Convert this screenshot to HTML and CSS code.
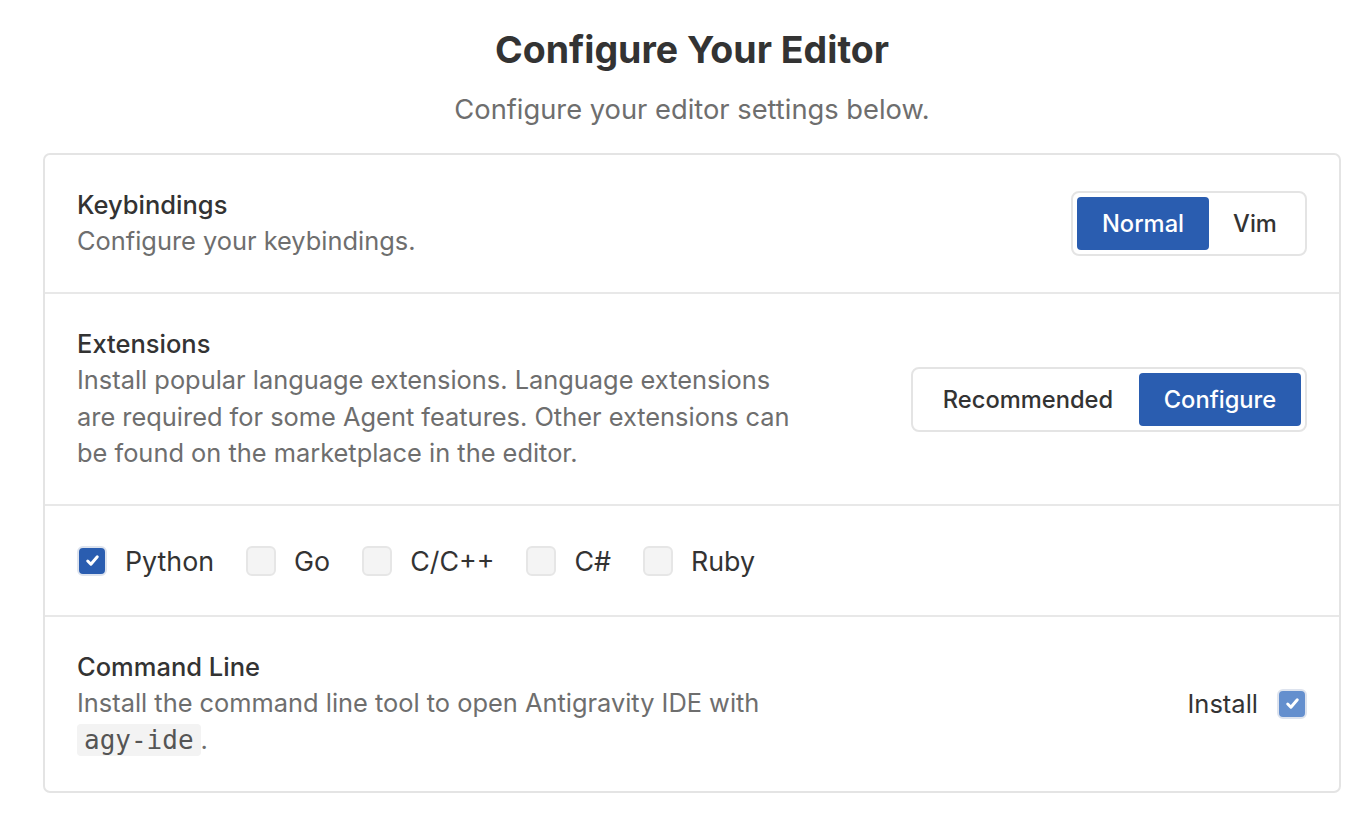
FILE: index.html
```html
<!DOCTYPE html>
<html lang="en">
  <head>
    <meta charset="UTF-8" />
    <meta name="viewport" content="width=device-width, initial-scale=1.0" />
    <title>Configure Your Editor</title>
    <link rel="stylesheet" href="styles.css">
  </head>
  <body>
    <div class="page">
      <h1 class="page-title">Configure Your Editor</h1>
      <p class="page-subtitle">Configure your editor settings below.</p>

      <div class="settings-card">
        <div class="setting-row">
          <div class="setting-info">
            <div class="setting-title">Keybindings</div>
            <div class="setting-desc">Configure your keybindings.</div>
          </div>
          <div class="segmented">
            <button class="seg-btn active seg-normal">Normal</button>
            <button class="seg-btn seg-vim">Vim</button>
          </div>
        </div>

        <div class="setting-row extensions-row">
          <div class="setting-info">
            <div class="setting-title">Extensions</div>
            <div class="setting-desc ext-desc">
              Install popular language extensions. Language extensions are required for some Agent features. Other extensions can be found on the marketplace in the editor.
            </div>
          </div>
          <div class="segmented">
            <button class="seg-btn seg-rec">Recommended</button>
            <button class="seg-btn active seg-conf">Configure</button>
          </div>
        </div>

        <div class="setting-row lang-row">
          <label class="lang-option">
            <span class="check checked">
              <svg viewBox="0 0 16 16" width="17" height="17"><path d="M3.5 8.5l3 3 6-7" fill="none" stroke="#fff" stroke-width="2.8" stroke-linecap="round" stroke-linejoin="round"/></svg>
            </span>
            Python
          </label>
          <label class="lang-option"><span class="check"></span>Go</label>
          <label class="lang-option"><span class="check"></span>C/C++</label>
          <label class="lang-option"><span class="check"></span>C#</label>
          <label class="lang-option"><span class="check"></span>Ruby</label>
        </div>

        <div class="setting-row cli-row">
          <div class="setting-info">
            <div class="setting-title">Command Line</div>
            <div class="setting-desc cli-desc">
              Install the command line tool to open Antigravity IDE with <code class="inline-code">agy-ide</code>.
            </div>
          </div>
          <label class="install">
            Install
            <span class="check checked soft">
              <svg viewBox="0 0 16 16" width="17" height="17"><path d="M3.5 8.5l3 3 6-7" fill="none" stroke="#fff" stroke-width="2.8" stroke-linecap="round" stroke-linejoin="round"/></svg>
            </span>
          </label>
        </div>
      </div>
    </div>
  </body>
</html>
```

FILE: styles.css
```css
body {
  margin: 0;
  font-family: Inter, "Noto Sans", sans-serif;
  background-color: #fff;
  color: #333;
}

.page {
  padding: 27px 29px 0 43px;
}

.page-title {
  margin: 0;
  text-align: center;
  font-size: 37.5px;
  font-weight: 700;
  line-height: 46px;
  color: #333;
}

.page-subtitle {
  margin: 20px 0 26px;
  text-align: center;
  font-size: 27.3px;
  line-height: 34px;
  color: #6e6e6e;
}

.settings-card {
  border: 2px solid #e4e4e4;
  border-radius: 7px;
}

.setting-row {
  display: flex;
  align-items: center;
  justify-content: space-between;
  padding: 0 32px;
  border-bottom: 2px solid #e8e8e8;
}
.setting-row:last-child {
  border-bottom: none;
}

.setting-row:first-child {
  height: 137px;
}
.extensions-row {
  height: 210px;
}
.lang-row {
  height: 109px;
  justify-content: flex-start;
  gap: 32px;
}
.cli-row {
  height: 174px;
  align-items: flex-start;
  padding-top: 32px;
  box-sizing: border-box;
}

.setting-title {
  font-size: 25.5px;
  font-weight: 500;
  line-height: 36px;
  color: #333;
}

.setting-desc {
  font-size: 25.4px;
  line-height: 36.5px;
  color: #6e6e6e;
}

.ext-desc {
  max-width: 730px;
}
.cli-desc {
  max-width: 720px;
}

.segmented {
  display: flex;
  padding: 4px;
  border: 2px solid #e4e4e4;
  border-radius: 8px;
  background-color: #fff;
}

.seg-btn {
  border: none;
  background: none;
  font-family: inherit;
  font-size: 23.7px;
  font-weight: 500;
  color: #333;
  height: 53px;
  padding: 0;
  border-radius: 4px;
}
.seg-btn.active {
  background-color: #2a5db0;
  color: #fff;
}
.seg-normal {
  width: 132px;
}
.seg-vim {
  width: 92px;
}
.seg-rec {
  width: 222px;
}
.seg-conf {
  width: 162px;
}

.lang-option {
  display: flex;
  align-items: center;
  gap: 18px;
  font-size: 26.8px;
  color: #333;
}

.check {
  width: 26px;
  height: 26px;
  border: 2px solid #e6e6e6;
  border-radius: 6px;
  background-color: #f4f4f4;
  display: flex;
  align-items: center;
  justify-content: center;
}
.check.checked {
  background-color: #2a5db0;
  border-color: #dde3ee;
}
.check.soft {
  background-color: #648fce;
}

.inline-code {
  font-family: "DejaVu Sans Mono", "Liberation Mono", monospace;
  font-size: 26px;
  background-color: #f3f3f3;
  border-radius: 4px;
  padding: 1px 7px;
  color: #555;
}

.install {
  display: flex;
  align-items: center;
  gap: 19px;
  font-size: 25.5px;
  color: #333;
  margin-top: 39px;
}
```
